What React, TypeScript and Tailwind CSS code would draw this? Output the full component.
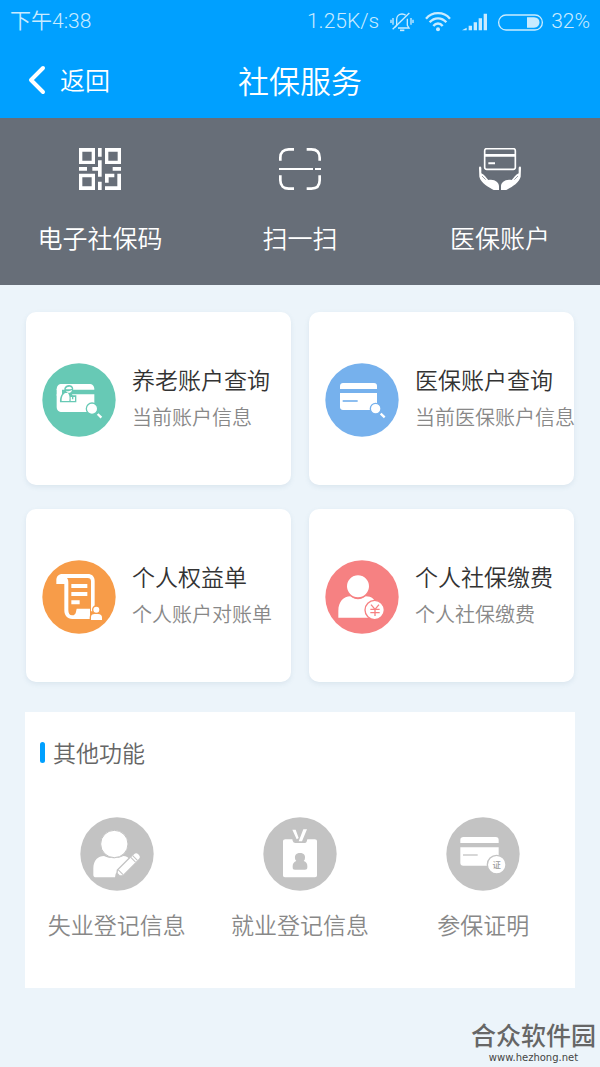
import type { ReactNode } from "react";

const STATUS = "#c9ebff";

function BellOffIcon() {
  return (
    <svg viewBox="0 0 72 60" className="h-5 w-6" fill="none" stroke={STATUS} strokeWidth="4" aria-hidden="true">
      <path d="M15 46 L20 40 V22 C20 12 27 6 36 6 C40 6 44 7 47 10 M52 20 V40 L57 48 H24" />
      <path d="M30 55 H43" strokeWidth="5" />
      <path d="M8 52 L58 3" />
      <path d="M9 18 V38 M63 18 V38 M3 23 V33 M69 23 V33" />
    </svg>
  );
}

function WifiIcon() {
  return (
    <svg viewBox="0 0 78 60" className="h-5 w-[26px]" fill="none" stroke={STATUS} strokeWidth="7" aria-hidden="true">
      <path d="M3 20 C22 -2 56 -2 75 20" />
      <path d="M14 31 C28 15 50 15 64 31" />
      <path d="M25 42 C33 32 45 32 53 42" />
      <circle cx="39" cy="52" r="6" fill={STATUS} stroke="none" />
    </svg>
  );
}

function SignalIcon() {
  return (
    <svg viewBox="0 0 75 54" className="h-[18px] w-[25px]" fill={STATUS} aria-hidden="true">
      <path d="M0 52 L14 44 V52Z M20 38 H30 V52 H20Z M35 28 H45 V52 H35Z M50 16 H60 V52 H50Z M65 2 H75 V52 H65Z" />
    </svg>
  );
}

function BatteryIcon() {
  return (
    <svg viewBox="0 0 135 51" className="h-[17px] w-[45px]" aria-hidden="true">
      <rect x="2" y="3" width="131" height="45" rx="22" fill="none" stroke={STATUS} strokeWidth="4" />
      <path d="M87 10 H108 C130 10 130 41 108 41 H87Z" fill={STATUS} />
    </svg>
  );
}

function QrIcon() {
  return (
    <svg viewBox="0 0 126 126" className="size-[42px]" fill="#fff" aria-hidden="true">
      <path fillRule="evenodd" d="M0 0H48V48H0Z M10 11V38H38V11Z M78 0H126V48H78Z M88 11V38H116V11Z M0 77H48V126H0Z M10 88V115H38V88Z" />
      <path d="M57 0H68V26H57Z M57 37H68V86H57V68H40V57H57Z M0 57H24V68H0Z M101 57H126V68H101Z M57 101H68V126H57Z M78 77H106V88H89V104H78Z M115 77H126V126H78V115H115Z" />
    </svg>
  );
}

function ScanIcon() {
  return (
    <svg viewBox="0 0 126 126" className="size-[42px]" fill="none" stroke="#fff" strokeWidth="8" aria-hidden="true">
      <path d="M4 38 V29 C4 13 14 4 29 4 H45 M83 4 H97 C113 4 122 13 122 29 V38 M4 82 V97 C4 113 14 122 29 122 H45 M83 122 H97 C113 122 122 113 122 97 V82" />
      <path d="M0 63 H102 M108 63 H126" strokeWidth="6" />
    </svg>
  );
}

function HandsCardIcon() {
  return (
    <svg viewBox="0 0 126 126" className="size-[42px]" fill="#fff" aria-hidden="true">
      <rect x="17" y="2" width="92" height="62" rx="6" fill="none" stroke="#fff" strokeWidth="5" />
      <path d="M16 18H110V26H16Z M28 43H48V49H28Z" />
      <path d="M0 60 C0 54 6 54 7 60 V76 C16 80 22 90 28 96 C46 92 60 102 60 115 V126 H44 C31 118 6 106 1 86Z" />
      <path d="M126 60 C126 54 120 54 119 60 V76 C110 80 104 90 98 96 C80 92 66 102 66 115 V126 H82 C95 118 120 106 125 86Z" />
      <path d="M9 84 L20 95 M117 84 L106 95" fill="none" stroke="#676e78" strokeWidth="2" />
    </svg>
  );
}

function Disc({ color, children }: { color: string; children: ReactNode }) {
  return (
    <svg viewBox="0 0 222 222" className="size-[74px] shrink-0" fill="#fff" aria-hidden="true">
      <circle cx="111" cy="111" r="110" fill={color} />
      {children}
    </svg>
  );
}

function PensionIcon() {
  const c = "#67c9b5";
  return (
    <Disc color={c}>
      <path d="M44 80 C44 69 49 63 60 63 H141 C152 63 157 69 157 80Z" />
      <path d="M44 94 H157 V147 H60 C50 147 44 141 44 131Z" />
      <path d="M44 78 H60 V98 H44Z" />
      <path d="M54 118 C53 101 59 90 69 86 C63 75 71 66 81 66 C91 66 97 75 92 85 L88 91 L92 97 H103 V118Z" fill={c} />
      <path d="M59 114 C59 101 63 92 71 90 H78 C82 95 84 103 82 114Z M71 78 C75 69 87 69 90 77 C84 79 77 80 71 78Z M72 83 C79 86 85 84 90 81 C89 91 76 93 72 83Z M86 102 H90 V109 H94 V102 H99 V114 H86Z" />
      <circle cx="150" cy="137" r="17" stroke={c} strokeWidth="4" />
      <path d="M167 153 L178 164" stroke="#fff" strokeWidth="7" />
    </Disc>
  );
}

function MedicalIcon() {
  const c = "#76b1ed";
  return (
    <Disc color={c}>
      <path d="M45 78 V69 C45 63 49 60 54 60 H147 C153 60 156 64 156 69 V78Z" />
      <path d="M45 90 H156 V141 H54 C48 141 45 137 45 132Z" />
      <path d="M53 114 H98" stroke={c} strokeWidth="5" />
      <circle cx="152" cy="137" r="16" stroke={c} strokeWidth="4" />
      <path d="M167 152 L179 163" stroke="#fff" strokeWidth="7" />
    </Disc>
  );
}

function StatementIcon() {
  const c = "#f79c49";
  return (
    <Disc color={c}>
      <path d="M43 72 V61 C43 49 50 42 61 42 H137 C150 42 158 50 158 63 V154 H147 V64 C147 57 143 54 137 54 H75 C78 58 79 62 79 68 V150 C79 160 83 166 90 166 C98 166 101 161 102 155 L104 146 H144 V177 H91 C76 177 67 167 67 151 V72Z" />
      <path d="M88 72H136V84H88Z M88 96H136V108H88Z M88 121H113V133H88Z" />
      <path d="M145 182 V172 C145 164 151 160 158 160 H168 C176 160 182 165 182 173 V182Z" stroke={c} strokeWidth="4" />
      <circle cx="163" cy="149" r="11" stroke={c} strokeWidth="4" />
    </Disc>
  );
}

function PaymentIcon() {
  const c = "#f68182";
  return (
    <Disc color={c}>
      <path d="M40 173 V153 C40 125 56 109 76 109 C91 121 107 121 122 109 C141 109 150 119 153 135 V173Z" />
      <circle cx="99" cy="79" r="35" stroke={c} strokeWidth="4" />
      <circle cx="149" cy="150" r="29" stroke={c} strokeWidth="4" />
      <path d="M138 134 L150 148 L162 134 M150 148 V168 M136 148 H164 M136 158 H164" fill="none" stroke={c} strokeWidth="4" />
    </Disc>
  );
}

function UnemploymentIcon() {
  const c = "#c3c3c3";
  return (
    <Disc color={c}>
      <path d="M40 174 V154 C40 129 55 117 72 117 C91 126 112 126 130 117 C139 117 145 121 149 127 L107 170 L105 181 H48 C43 181 40 178 40 174Z" />
      <circle cx="103" cy="81" r="41" stroke={c} strokeWidth="3" />
      <g transform="translate(110 178) rotate(-45)">
        <path d="M0 0 L15 -12 H85 C98 -12 98 12 85 12 H15Z" stroke={c} strokeWidth="4" />
        <path d="M17 -10 V10 M70 -10 V10 M78 -10 V10" stroke={c} strokeWidth="3" />
        <path d="M0 0 L9 -6 V6Z" fill={c} />
      </g>
    </Disc>
  );
}

function EmploymentIcon() {
  const c = "#c3c3c3";
  return (
    <Disc color={c}>
      <path d="M60 73 C60 69 63 67 67 67 H88 C90 78 94 78 99 78 H125 C131 78 131 74 133 67 H155 C160 67 162 69 162 73 V175 C162 179 160 181 156 181 H66 C62 181 60 179 60 175Z" />
      <path d="M88 38 H98 L107 63 L101 67Z M121 37 H132 L117 73 H107Z" />
      <path d="M97 128 C93 115 99 108 111 108 C123 108 129 115 125 128 L122 132 C130 135 133 140 133 147 V151 C133 157 130 158 126 158 H96 C91 158 89 157 89 151 V147 C89 140 93 135 100 132Z" fill={c} />
    </Disc>
  );
}

function CertificateIcon() {
  const c = "#c3c3c3";
  return (
    <Disc color={c}>
      <path d="M43 78 V68 C43 63 47 60 52 60 H149 C155 60 158 64 158 69 V78Z" />
      <path d="M43 91 H158 V146 H52 C46 146 43 142 43 137Z" />
      <path d="M51 114 H95" stroke={c} strokeWidth="4" />
      <circle cx="152" cy="143" r="28" stroke={c} strokeWidth="4" />
      <text x="152" y="152" textAnchor="middle" fontSize="25" fontWeight="500" fill="#999">证</text>
    </Disc>
  );
}

const shortcuts = [
  { label: "电子社保码", icon: <QrIcon /> },
  { label: "扫一扫", icon: <ScanIcon /> },
  { label: "医保账户", icon: <HandsCardIcon /> },
];

const services = [
  { title: "养老账户查询", note: "当前账户信息", icon: <PensionIcon /> },
  { title: "医保账户查询", note: "当前医保账户信息", icon: <MedicalIcon /> },
  { title: "个人权益单", note: "个人账户对账单", icon: <StatementIcon /> },
  { title: "个人社保缴费", note: "个人社保缴费", icon: <PaymentIcon /> },
];

const others = [
  { label: "失业登记信息", icon: <UnemploymentIcon /> },
  { label: "就业登记信息", icon: <EmploymentIcon /> },
  { label: "参保证明", icon: <CertificateIcon /> },
];

export default function App() {
  return (
    <div className="relative min-h-screen bg-[#ecf4fa] font-['Noto_Sans_CJK_SC',sans-serif] font-[350]">
      <header className="bg-[#00a0ff] text-white">
        <div className="flex h-11 items-center justify-between px-[10px] font-['Roboto','Noto_Sans_CJK_SC',sans-serif] text-[21px] text-[#c9ebff]">
          <span>下午4:38</span>
          <div className="flex items-center gap-[11px]">
            <span>1.25K/s</span>
            <BellOffIcon />
            <WifiIcon />
            <SignalIcon />
            <div className="flex items-center gap-2">
              <BatteryIcon />
              <span>32%</span>
            </div>
          </div>
        </div>
        <div className="grid h-[74px] grid-cols-[1fr_auto_1fr] items-center pb-0.5">
          <button type="button" className="flex items-center gap-[14px] pl-7 text-[25px]">
            <svg viewBox="0 0 18 30" className="h-[30px] w-[18px]" fill="none" stroke="#fff" strokeWidth="4" strokeLinecap="round" strokeLinejoin="round" aria-hidden="true">
              <path d="M15 3 L3 15 L15 27" />
            </svg>
            返回
          </button>
          <h1 className="text-[31px] font-[350]">社保服务</h1>
        </div>
      </header>

      <nav className="grid grid-cols-3 bg-[#676e78] py-[30px] text-white">
        {shortcuts.map((s) => (
          <button key={s.label} type="button" className="flex flex-col items-center gap-[29px] text-[25px] leading-9">
            {s.icon}
            <span>{s.label}</span>
          </button>
        ))}
      </nav>

      <main className="pt-[27px] pb-[79px]">
        <div className="grid grid-cols-2 gap-x-[18px] gap-y-6 px-[26px]">
          {services.map((s) => (
            <button key={s.title} type="button" className="flex min-w-0 items-center gap-4 rounded-[10px] bg-white pt-[51px] pb-12 pl-4 text-left whitespace-nowrap shadow-[0_2px_5px_rgba(90,130,160,0.12)]">
              {s.icon}
              <span className="-mt-0.5 flex flex-col">
                <span className="text-[23px] leading-9 text-[#333]">{s.title}</span>
                <span className="text-[20px] leading-10 text-[#888]">{s.note}</span>
              </span>
            </button>
          ))}
        </div>

        <section className="mx-[25px] mt-[30px] bg-white pt-[22px] pb-[46px]">
          <h2 className="flex items-center gap-2 pl-[15px] text-[23px] leading-9 font-[350] text-[#666]">
            <span className="h-[21px] w-[5px] rounded-sm bg-[#00a0ff]" />
            其他功能
          </h2>
          <div className="mt-[47px] grid grid-cols-3">
            {others.map((o) => (
              <button key={o.label} type="button" className="flex flex-col items-center gap-[15px] text-[23px] leading-9 text-[#888]">
                {o.icon}
                <span>{o.label}</span>
              </button>
            ))}
          </div>
        </section>
      </main>

      <div className="absolute right-1 bottom-[3px] flex flex-col items-center text-[#666]">
        <span className="text-[25px] leading-9 font-medium">合众软件园</span>
        <span className="font-['DejaVu_Sans',sans-serif] text-[10px] leading-3 font-normal text-[#444]">www.hezhong.net</span>
      </div>
    </div>
  );
}
